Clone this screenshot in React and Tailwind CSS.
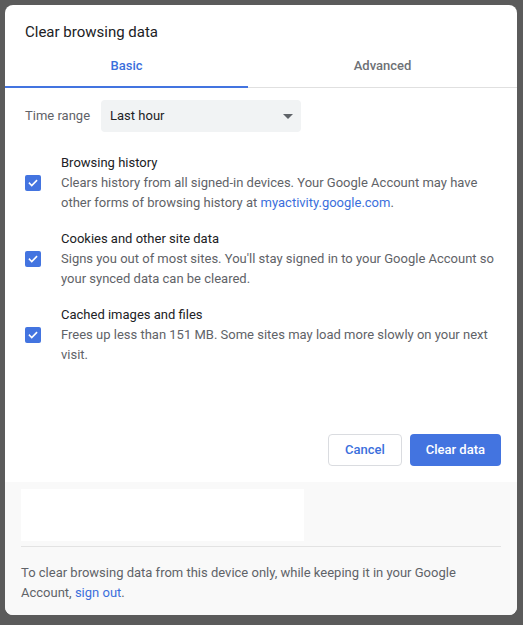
import { useState } from 'react';

const Checkbox = ({ checked, onChange }) => (
    <button
        onClick={onChange}
        className={`w-4 h-4 rounded-[2px] flex items-center justify-center shrink-0 ${checked ? 'bg-[#4374e0]' : 'border-2 border-[#5f6368]'}`}
    >
        {checked && (
            <svg width="12" height="12" viewBox="0 0 24 24" fill="none" stroke="white" strokeWidth="3.2" strokeLinecap="square">
                <path d="M5 12.5l4.5 4.5L19 7.5" />
            </svg>
        )}
    </button>
);

const items = [
    {
        title: 'Browsing history',
        desc: (
            <>
                Clears history from all signed-in devices. Your Google Account may have other forms of browsing history at{' '}
                <a className="text-[#3b6fdc]">myactivity.google.com</a>.
            </>
        ),
    },
    {
        title: 'Cookies and other site data',
        desc: "Signs you out of most sites. You'll stay signed in to your Google Account so your synced data can be cleared.",
    },
    {
        title: 'Cached images and files',
        desc: 'Frees up less than 151 MB. Some sites may load more slowly on your next visit.',
    },
];

const App = () => {
    const [tab, setTab] = useState('basic');
    const [checked, setChecked] = useState([true, true, true]);

    return (
        <div className="w-[523px] h-[625px] bg-[#5b5b5b] p-[5px] pr-[6px] pb-[10px] font-['Roboto',sans-serif]">
            <div className="h-full bg-white rounded-lg overflow-hidden flex flex-col">
                <div className="px-5 pt-[17px] pb-[2px] text-[15px] text-[#202124] leading-5">Clear browsing data</div>

                <div className="flex border-b border-[#e0e0e0]">
                    {['basic', 'advanced'].map(t => (
                        <button
                            key={t}
                            onClick={() => setTab(t)}
                            className={`h-[44px] pt-[1px] text-[13px] font-medium border-b-2 -mb-px ${t === 'basic' ? 'w-[243px]' : 'flex-1'} ${tab === t ? 'text-[#3b6fdc] border-[#4374e0]' : 'text-[#6e7175] border-transparent'}`}
                        >
                            {t === 'basic' ? 'Basic' : 'Advanced'}
                        </button>
                    ))}
                </div>

                <div className="px-5 pt-[12px] flex items-center gap-[11px]">
                    <span className="text-[13px] text-[#5f6368]">Time range</span>
                    <div className="w-[200px] h-[32px] bg-[#f1f3f4] rounded-[4px] flex items-center justify-between pl-[9px] pr-[8px]">
                        <span className="text-[13px] text-[#202124]">Last hour</span>
                        <svg width="10" height="5" viewBox="0 0 10 5"><path d="M0 0h10L5 5z" fill="#5f6368" /></svg>
                    </div>
                </div>

                <div className="px-5 pt-[21px] flex flex-col gap-4">
                    {items.map((item, i) => (
                        <div key={item.title} className="flex items-center gap-5">
                            <Checkbox
                                checked={checked[i]}
                                onChange={() => setChecked(c => c.map((v, j) => (j === i ? !v : v)))}
                            />
                            <div className="text-[13px] leading-5">
                                <div className="text-[#202124]">{item.title}</div>
                                <div className="text-[#5f6368]">{item.desc}</div>
                            </div>
                        </div>
                    ))}
                </div>

                <div className="flex-1" />

                <div className="flex justify-end gap-2 px-4 pb-[16px]">
                    <button className="h-[32px] px-[16px] rounded-[4px] border border-[#dadce0] text-[13px] font-medium text-[#3b6fdc]">Cancel</button>
                    <button className="h-[32px] px-[16px] rounded-[4px] bg-[#4374e0] text-[13px] font-medium text-white">Clear data</button>
                </div>

                <div className="bg-[#f9f9f9] px-4 pt-[7px] pb-[12px]">
                    <div className="w-[283px] h-[52px] bg-white" />
                    <div className="mt-[5px] border-t border-[#e3e3e3]" />
                    <p className="mt-[16px] text-[13px] leading-5 text-[#5f6368]">
                        To clear browsing data from this device only, while keeping it in your Google Account,{' '}
                        <a className="text-[#3b6fdc]">sign out</a>.
                    </p>
                </div>
            </div>
        </div>
    );
};

export default App;
